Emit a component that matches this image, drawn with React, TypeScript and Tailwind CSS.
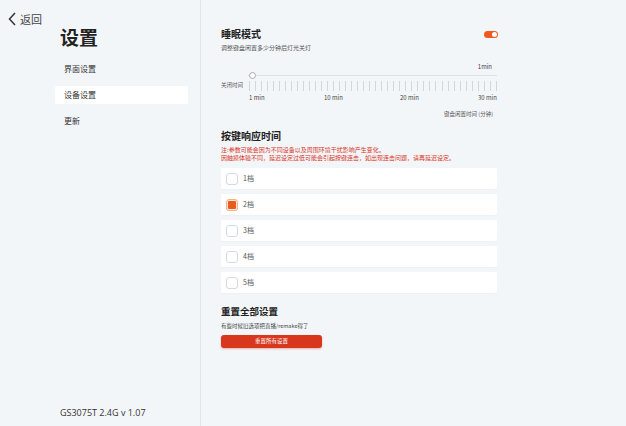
import React from "react";

const font = { fontFamily: '"Noto Sans CJK SC", "Noto Sans", sans-serif' };

export default function App() {
  const ticks = Array.from({ length: 42 }, (_, i) => i);
  const options = ["1档", "2档", "3档", "4档", "5档"];
  return (
    <div className="w-[626px] h-[426px] bg-[#f3f6f9] flex text-[#333]" style={font}>
      {/* Sidebar */}
      <div className="w-[201px] h-full border-r border-[#e3e7eb] flex flex-col relative">
        <div className="flex items-center pl-[8px] pt-[10px] h-[18px] box-content">
          <svg width="9" height="14" viewBox="0 0 9 14" className="mr-[3px]">
            <path d="M7 1 L1.5 7 L7 13" fill="none" stroke="#333" strokeWidth="1.5" />
          </svg>
          <span className="text-[11px] text-[#444] leading-none">返回</span>
        </div>
        <div className="pl-[60px] mt-[-5px] text-[19px] font-bold leading-[28px] text-[#222]">设置</div>
        <div className="pl-[55px] pr-[12px] mt-[9px] flex flex-col gap-[8px]">
          <div className="h-[18px] pl-[9px] flex items-center text-[8px]">界面设置</div>
          <div className="h-[18px] pl-[9px] flex items-center text-[8px] bg-white rounded-[2px]">设备设置</div>
          <div className="h-[18px] pl-[9px] flex items-center text-[8px]">更新</div>
        </div>
        <div className="mt-auto pl-[60px] pb-[7px] text-[9px] text-[#333]" style={{ fontFamily: '"Open Sans", "Noto Sans", sans-serif' }}>
          GS3075T 2.4G v 1.07
        </div>
      </div>

      {/* Main */}
      <div className="flex-1 pl-[20px]">
        <div className="w-[276px] pt-[27px]">
          <div className="flex items-center justify-between">
            <div className="text-[10px] font-semibold leading-[14px] text-[#222]">睡眠模式</div>
            <div className="w-[14px] h-[7px] rounded-full bg-[#ee5a1f] flex items-center justify-end pr-[1px] mr-[-1px]">
              <div className="w-[5px] h-[5px] rounded-full bg-white" />
            </div>
          </div>
          <div className="text-[6px] text-[#555] mt-[2px] leading-[10px]">调整键盘闲置多少分钟后灯光关灯</div>

          {/* slider */}
          <div className="mt-[10px] pl-[27px]">
            <div className="flex justify-end text-[6px] text-[#444] leading-[8px] pr-[5px]">1min</div>
            <div className="relative h-[8px] flex items-center">
              <div className="w-full h-[1px] bg-[#dcdfe3]" />
              <div className="absolute left-[1px] top-[0.5px] w-[7px] h-[7px] rounded-full border border-[#aaa] bg-white" />
            </div>
          </div>
          <div className="flex items-center mt-[2px]">
            <div className="w-[27px] text-[5.5px] text-[#555] leading-none">关闭时间</div>
            <div className="flex-1 flex justify-between h-[10px] pl-[1px]">
              {ticks.map((t) => (
                <div key={t} className="w-[1px] h-full bg-[#d3d6da]" />
              ))}
            </div>
          </div>
          <div className="flex pl-[28px] mt-[3px] text-[6px] text-[#444] leading-[8px]">
            <span className="w-[75px]">1 min</span>
            <span className="w-[76px]">10 min</span>
            <span className="w-[78px]">20 min</span>
            <span>30 min</span>
          </div>
          <div className="flex justify-end text-[5.5px] text-[#555] mt-[8px] leading-[8px] pr-[4px]">键盘闲置时间 (分钟)</div>

          <div className="text-[10px] font-semibold leading-[14px] text-[#222] mt-[11px]">按键响应时间</div>
          <div className="text-[6px] text-[#d8321c] leading-[8px] mt-[3px]">
            注:参数可能会因为不同设备以及周围环境干扰影响产生变化。
            <br />
            因触摸体验不同，延迟设定过低可能会引起按键连击，如出现连击问题，请再延迟设定。
          </div>

          <div className="flex flex-col gap-[5px] mt-[6px]">
            {options.map((o, i) => (
              <div key={o} className="h-[21px] bg-white rounded-[2px] flex items-center pl-[5px] shadow-[0_1px_1px_rgba(0,0,0,0.02)]">
                {i === 1 ? (
                  <div className="w-[12px] h-[12px] rounded-[3px] border border-[#f5b08a] bg-[#fde9dc] flex items-center justify-center">
                    <div className="w-[8px] h-[8px] rounded-[1px] bg-[#e85d1f]" />
                  </div>
                ) : (
                  <div className="w-[12px] h-[12px] rounded-[3px] border border-[#d6d9dd] bg-white" />
                )}
                <span className="ml-[5px] text-[7px] text-[#555]">{o}</span>
              </div>
            ))}
          </div>

          <div className="text-[9.5px] font-semibold leading-[14px] text-[#222] mt-[11px]">重置全部设置</div>
          <div className="text-[5.5px] text-[#444] leading-[8px] mt-[4px]">有些时候旧选项把直播/remake得了</div>
          <div className="mt-[5px] w-[101px] h-[13px] rounded-[3px] bg-[#d8361d] flex items-center justify-center text-[5.5px] text-white shadow-[0_1px_2px_rgba(200,50,20,0.35)]">
            重置所有设置
          </div>
        </div>
      </div>
    </div>
  );
}
